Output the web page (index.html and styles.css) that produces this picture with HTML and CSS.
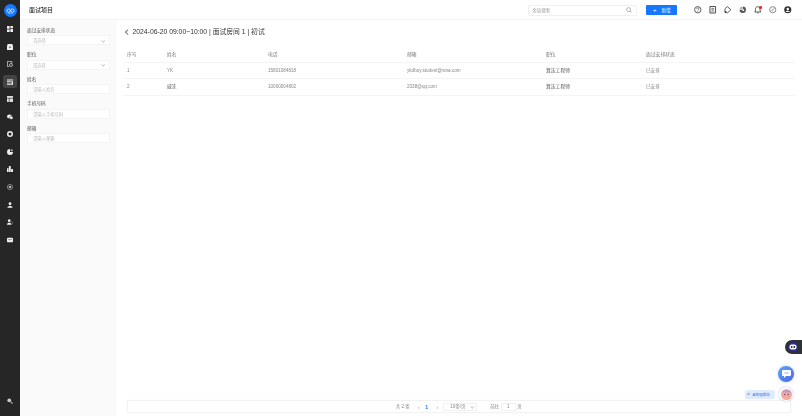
FILE: index.html
```html
<!DOCTYPE html>
<html lang="zh">
<head>
<meta charset="utf-8">
<title>面试项目</title>
<link rel="stylesheet" href="styles.css">
</head>
<body>
<div class="app">
  <nav class="sidebar">
    <div class="logo"><svg width="12" height="8" viewBox="0 0 12 8"><circle cx="3.500" cy="3.500" r="2.200" fill="none" stroke="#fff" stroke-width="1"/><circle cx="8.500" cy="3.500" r="2.200" fill="none" stroke="#fff" stroke-width="1"/><path d="M3 7h6" stroke="#fff" stroke-width=".6"/></svg></div>
    <div class="nav-list">
      <div class="nav-item"><svg class="nav-icon" viewBox="0 0 8 8"><path d="M0 0h3.500v3.500H0zM4.500 0H8v2.500H4.500zM0 4.500h3.500V8H0zM4.500 3.500H8V8H4.500z" fill="#eee"/></svg></div>
      <div class="nav-item"><svg class="nav-icon" viewBox="0 0 8 8"><path d="M1 0h6l1 2.500V8H0V2.500zM2.500 3.500v1h3v-1z" fill="#eee" fill-rule="evenodd"/></svg></div>
      <div class="nav-item"><svg class="nav-icon" viewBox="0 0 8 8"><path d="M.5.500h6V3M.5.500V7.500H3" fill="none" stroke="#ddd"/><circle cx="5.300" cy="5.300" r="2" fill="none" stroke="#ddd"/></svg></div>
      <div class="nav-item active"><svg class="nav-icon" viewBox="0 0 8 8"><path d="M0 .5h8v1.500H0zM0 3h5v1H0zM0 5h5v1H0zM6 3h2v4.500H0v-.7h6z" fill="#eee"/></svg></div>
      <div class="nav-item"><svg class="nav-icon" viewBox="0 0 8 8"><path d="M0 0h8v8H0z" fill="#ddd"/><path d="M0 3h8M3 3v5" stroke="#262626" stroke-width=".8"/></svg></div>
      <div class="nav-item"><svg class="nav-icon" viewBox="0 0 8 8"><ellipse cx="3.200" cy="3.200" rx="3.200" ry="2.600" fill="#eee"/><ellipse cx="5.600" cy="5" rx="2.400" ry="2" fill="#eee" stroke="#262626" stroke-width=".5"/></svg></div>
      <div class="nav-item"><svg class="nav-icon" viewBox="0 0 8 8"><circle cx="4" cy="4" r="3" fill="none" stroke="#eee" stroke-width="2"/></svg></div>
      <div class="nav-item"><svg class="nav-icon" viewBox="0 0 8 8"><path d="M4 0a4 4 0 1 0 4 4H4z" fill="#eee"/><path d="M5 0a3 3 0 0 1 3 3H5z" fill="#aaa"/></svg></div>
      <div class="nav-item"><svg class="nav-icon" viewBox="0 0 8 8"><path d="M0 3h2V8H0zM2.500 0h2.500v8H2.500zM5.500 4H8v4H5.500z" fill="#eee"/></svg></div>
      <div class="nav-item"><svg class="nav-icon" viewBox="0 0 8 8"><circle cx="4" cy="4" r="3.500" fill="none" stroke="#999" stroke-width="1"/><circle cx="4" cy="4" r="1.800" fill="#bbb"/></svg></div>
      <div class="nav-item"><svg class="nav-icon" viewBox="0 0 8 8"><circle cx="4" cy="2.300" r="1.900" fill="#eee"/><path d="M.5 7.500c0-3 7-3 7 0z" fill="#eee"/></svg></div>
      <div class="nav-item"><svg class="nav-icon" viewBox="0 0 8 8"><circle cx="3" cy="2.200" r="1.800" fill="#eee"/><path d="M0 7.500c0-3.400 6-3.400 6 0z" fill="#eee"/><path d="M6 3.500c1.500.5 2 2 2 3.500" fill="none" stroke="#bbb" stroke-width=".8"/></svg></div>
      <div class="nav-item"><svg class="nav-icon" viewBox="0 0 8 8"><rect x="0" y="1" width="8" height="6" rx="1" fill="#eee"/><path d="M1.500 3.500h5" stroke="#555" stroke-width=".8"/></svg></div>
    </div>
    <div class="nav-bottom"><svg class="nav-icon" viewBox="0 0 8 8"><circle cx="3" cy="3" r="2.500" fill="#ccc"/><path d="M4.500 4.500L7.500 7.500" stroke="#aaa" stroke-width="1.500"/></svg></div>
  </nav>
  <div class="content">
    <header class="topbar">
      <h1 class="page-name">面试项目</h1>
      <div class="search"><span>全局搜索</span><svg width="6" height="6" viewBox="0 0 6 6"><circle cx="2.600" cy="2.600" r="2" fill="none" stroke="#888" stroke-width=".6"/><path d="M4 4l1.500 1.500" stroke="#888" stroke-width=".6"/></svg></div>
      <button class="add-btn"><span class="plus">+</span><span>新增</span></button>
      <div class="tools">
        <svg class="tool" viewBox="0 0 8 8"><circle cx="4" cy="4" r="3.400" fill="none" stroke="#444" stroke-width=".9"/><path d="M2.800 3c0-1.500 2.400-1.500 2.400 0 0 .8-1.200.8-1.200 1.800M4 5.400v.8" fill="none" stroke="#444" stroke-width=".7"/></svg>
        <svg class="tool" viewBox="0 0 8 8"><path d="M1 .5h6v7H1z" fill="none" stroke="#444"/><path d="M2.500 2.500h3M2.500 4h3M2.500 5.500h3" stroke="#444" stroke-width=".7"/></svg>
        <svg class="tool" viewBox="0 0 8 8"><path d="M3.500.6L7.400 4 3.500 7.400 1 6.500V3z" fill="none" stroke="#444" stroke-width=".9"/><circle cx="1.700" cy="6.300" r="1.100" fill="#444"/></svg>
        <svg class="tool" viewBox="0 0 8 8"><path d="M4 4V.6a3.400 3.400 0 1 1-3.400 3.400z" fill="#555"/><path d="M3 3V.7A3 3 0 0 0 .7 3z" fill="#888"/><circle cx="4.600" cy="4.400" r="1" fill="#fff"/></svg>
        <span class="bell-wrap"><svg class="tool" viewBox="0 0 8 8"><path d="M4 .8c-1.800 0-2.500 1.400-2.500 2.800v1.900L.7 6.400h6.600l-.8-.9V3.600C6.500 2.200 5.800.8 4 .8zM3.200 7.300h1.600" fill="none" stroke="#444" stroke-width=".9"/></svg><i class="dot"></i></span>
        <svg class="tool" viewBox="0 0 8 8"><circle cx="4" cy="4" r="3.300" fill="none" stroke="#666" stroke-width=".8"/><path d="M2.500 5.500l3-3" stroke="#666" stroke-width=".9"/></svg>
        <svg class="tool" viewBox="0 0 8 8"><circle cx="4" cy="4" r="3.800" fill="#333"/><circle cx="4" cy="3.100" r="1.300" fill="#fff"/><path d="M1.800 6.300c.5-1.700 3.900-1.700 4.400 0z" fill="#fff"/></svg>
      </div>
    </header>
    <div class="body">
      <aside class="filters">
        <div class="field"><label>面试安排状态</label><div class="control"><span>请选择</span><i class="caret"></i></div></div>
        <div class="field"><label>职位</label><div class="control"><span>请选择</span><i class="caret"></i></div></div>
        <div class="field"><label>姓名</label><div class="control"><span>请输入姓名</span></div></div>
        <div class="field"><label>手机号码</label><div class="control"><span>请输入手机号码</span></div></div>
        <div class="field"><label>邮箱</label><div class="control"><span>请输入邮箱</span></div></div>
      </aside>
      <main class="main">
        <div class="heading"><i class="back"></i><h2>2024-06-20 09:00~10:00 | 面试房间 1 | 初试</h2></div>
        <table class="grid">
          <thead><tr><th class="c1">序号</th><th class="c2">姓名</th><th class="c3">电话</th><th class="c4">邮箱</th><th class="c5">职位</th><th>面试安排状态</th></tr></thead>
          <tbody>
            <tr><td>1</td><td>YK</td><td>15801084818</td><td>ykdboy.student@sina.com</td><td class="strong">算法工程师</td><td>已安排</td></tr>
            <tr><td>2</td><td class="strong">戚冻</td><td>10000004802</td><td>2338@qq.com</td><td class="strong">算法工程师</td><td>已安排</td></tr>
          </tbody>
        </table>
        <div class="pager">
          <span class="total">共 2 条</span><span class="arrow">‹</span><b>1</b><span class="arrow">›</span>
          <span class="size">10条/页<i class="caret"></i></span>
          <span class="goto">前往<span class="page-input">1</span>页</span>
        </div>
      </main>
    </div>
  </div>
</div>
<div class="float-tab"><svg width="10" height="10" viewBox="0 0 10 10"><circle cx="5" cy="5" r="5" fill="#2b2b8f"/><rect x="1.500" y="2.500" width="7" height="5" rx="2" fill="#fff"/><circle cx="3.700" cy="5" r=".9" fill="#223"/><circle cx="6.300" cy="5" r=".9" fill="#223"/></svg></div>
<div class="chat"><svg width="9" height="8" viewBox="0 0 9 8"><path d="M1 0h7a1 1 0 0 1 1 1v4a1 1 0 0 1-1 1H4L2 8V6H1a1 1 0 0 1-1-1V1a1 1 0 0 1 1-1z" fill="#fff"/><path d="M2.500 3h4" stroke="#4f86f0" stroke-width=".7"/></svg></div>
<div class="assistant"><span class="bubble"><i></i>AI助理帮你</span><span class="face"><svg width="11" height="11" viewBox="0 0 11 11"><circle cx="5.500" cy="5.500" r="5.500" fill="#f4a89e"/><circle cx="3.800" cy="5.600" r=".7" fill="#533"/><circle cx="7.200" cy="5.600" r=".7" fill="#533"/><path d="M.8 3.500C3 .5 8 .5 10.200 3.500z" fill="#a99be0"/></svg></span></div>
</body>
</html>
```
FILE: styles.css
```css
* { box-sizing: border-box; }
html, body { margin: 0; height: 100%; overflow: hidden; }
body { font-family: "Liberation Sans", "Noto Sans CJK SC", sans-serif; font-size: 4.800px; color: #777; background: #fff; position: relative; filter: blur(.3px); }
.app { display: flex; width: 802px; height: 416px; }

.sidebar { width: 20px; flex: none; background: #262626; display: flex; flex-direction: column; align-items: center; padding-top: 4px; }
.logo { width: 13px; height: 13px; border-radius: 50%; background: #1677ff; display: flex; align-items: center; justify-content: center; }
.logo svg { width: 9px; height: 6px; }
.nav-list { display: flex; flex-direction: column; align-items: center; margin-top: 5.300px; }
.nav-item { width: 13.500px; height: 13.500px; margin-bottom: 4.050px; display: flex; align-items: center; justify-content: center; border-radius: 2px; }
.nav-item.active { background: #434343; }
.nav-icon { width: 6px; height: 6px; display: block; }
.nav-bottom { margin-top: auto; margin-bottom: 12px; }

.content { flex: 1; min-width: 0; display: flex; flex-direction: column; }
.topbar { height: 20px; flex: none; display: flex; align-items: center; padding: 1px 0 0 9px; border-bottom: 1px solid #f4f4f4; }
.page-name { margin: 0; font-size: 6px; font-weight: 500; color: #333; line-height: 1; }
.search { margin-left: auto; width: 109px; height: 11px; border: 1px solid #f0f0f0; border-radius: 1px; display: flex; align-items: center; justify-content: space-between; padding: 0 4px 0 3px; font-size: 4.500px; color: #999; }
.add-btn { margin-left: 9px; width: 31px; height: 10.500px; border: 0; padding: 0; background: #1677ff; border-radius: 1px; color: #fff; font: inherit; font-size: 4.500px; display: flex; align-items: center; justify-content: center; gap: 5px; }
.plus { font-size: 6px; line-height: 1; }
.tools { display: flex; align-items: center; gap: 7.500px; margin-left: 17px; margin-right: 10.200px; }
.tool { width: 7.500px; height: 7.500px; display: block; }
.bell-wrap { position: relative; display: block; }
.dot { position: absolute; top: 0; right: 0; width: 2.500px; height: 2.500px; border-radius: 50%; background: #f5222d; }

.body { flex: 1; min-height: 0; display: flex; }
.filters { width: 97px; flex: none; background: #fafafa; padding: 6.500px 7px 0; display: flex; flex-direction: column; gap: 6px; }
.field { display: flex; flex-direction: column; gap: 1.500px; }
.field label { font-size: 4.700px; line-height: 7px; color: #555; }
.control { height: 10px; background: #fff; border: 1px solid #f4f4f4; display: flex; align-items: center; justify-content: space-between; padding: 0 5px; font-size: 4.300px; color: #bbb; }
.caret { display: inline-block; width: 2.500px; height: 2.500px; border-right: .5px solid #ccc; border-bottom: .5px solid #ccc; transform: rotate(45deg); }

.main { flex: 1; min-width: 0; display: flex; flex-direction: column; padding: 0 7px 3px 6px; }
.heading { display: flex; align-items: center; height: 27px; padding: 0 0 3px 3px; gap: 3px; flex: none; }
.heading h2 { margin: 0; font-size: 6.800px; font-weight: 400; color: #333; line-height: 1; white-space: nowrap; }
.back { width: 3.500px; height: 3.500px; border-left: .5px solid #777; border-bottom: .5px solid #777; transform: rotate(45deg); }

.grid { border-collapse: collapse; table-layout: fixed; width: 100%; }
.grid th, .grid td { text-align: left; font-weight: 400; padding: 0 0 0 4px; font-size: 4.600px; line-height: 6px; color: #888; border-bottom: 1px solid #f4f4f4; }
.grid th { height: 15.500px; color: #777; font-size: 4.800px; }
.grid td { height: 16.300px; }
.grid td.strong { color: #555; font-size: 4.800px; }
.c1 { width: 40px; }
.c2 { width: 101px; }
.c3 { width: 139px; }
.c4 { width: 139px; }
.c5 { width: 100px; }

.pager { margin: auto 4px 0; height: 13px; flex: none; border: 1px solid #f2f2f2; border-radius: 1px; display: flex; align-items: center; justify-content: center; font-size: 4.500px; line-height: 6px; color: #888; box-shadow: 0 0 2px rgba(0,0,0,.06); padding-right: .5px; }
.pager b { color: #1677ff; font-weight: 600; font-size: 5px; margin: 0 8px 0 5.500px; }
.total { margin-right: 8px; }
.arrow { color: #aaa; font-size: 6px; line-height: 1; }
.size { width: 34px; height: 8px; border: 1px solid #f0f0f0; display: flex; align-items: center; justify-content: space-between; padding: 0 3px 0 6px; margin-left: 5px; }
.goto { display: flex; align-items: center; gap: 1.500px; margin-left: 13px; }
.page-input { width: 15px; height: 8px; border: 1px solid #f0f0f0; display: flex; align-items: center; justify-content: center; }

.float-tab { position: absolute; right: 0; top: 340px; width: 17px; height: 14px; background: #2e3135; border-radius: 7px 0 0 7px; display: flex; align-items: center; padding-left: 3px; }
.chat { position: absolute; left: 778px; top: 366px; width: 16px; height: 16px; border-radius: 50%; background: linear-gradient(135deg, #59a6fa, #4c66e8); display: flex; align-items: center; justify-content: center; box-shadow: 0 0 3px rgba(80,110,240,.35); }
.assistant { position: absolute; left: 745px; top: 387px; display: flex; align-items: center; gap: 4px; }
.bubble { width: 30px; height: 9px; border-radius: 2px; background: #dfeafd; color: #2f6fe0; font-size: 3.500px; display: flex; align-items: center; gap: 3px; padding-left: 2px; white-space: nowrap; }
.bubble i { width: 2.500px; height: 2.500px; border-radius: 50%; background: #9bb6e8; }
.face { width: 14px; height: 14px; border-radius: 50%; background: #fff; box-shadow: 0 0 2px rgba(80,110,240,.5); display: flex; align-items: center; justify-content: center; }
```
